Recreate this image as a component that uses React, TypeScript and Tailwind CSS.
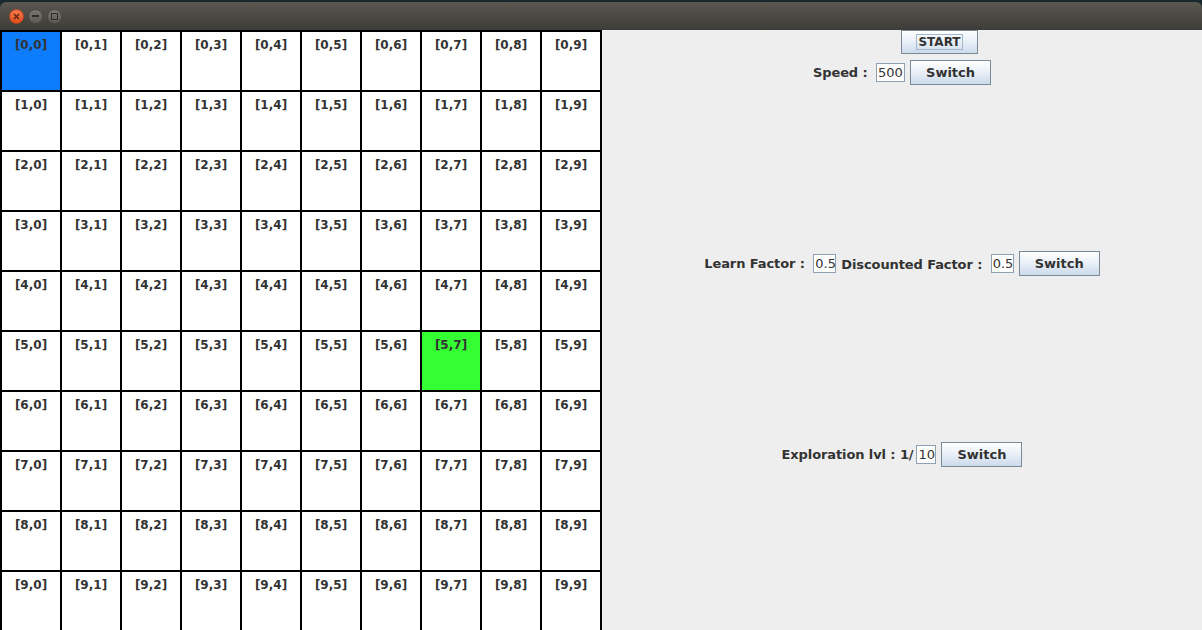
import React from 'react';

const rows = Array.from({ length: 10 }, (_, r) => r);
const cols = Array.from({ length: 10 }, (_, c) => c);

const dejavu = { fontFamily: '"DejaVu Sans", sans-serif' };

const cellColor = (r: number, c: number): string => {
  if (r === 0 && c === 0) return 'bg-[#0d7dfd]';
  if (r === 5 && c === 7) return 'bg-[#33ff33]';
  return 'bg-white';
};

const SwitchButton: React.FC<{ className?: string }> = ({ className }) => (
  <button
    className={`h-[25px] w-[81px] border border-[#7a8a99] bg-gradient-to-b from-[#ffffff] via-[#e8eff7] to-[#ccdaea] text-[13px] font-bold text-[#333333] ${className ?? ''}`}
  >
    Switch
  </button>
);

const Field: React.FC<{ value: string; width: string }> = ({ value, width }) => (
  <div
    className={`h-[19px] ${width} border border-[#8ea0b4] bg-white text-[13px] leading-[17px] text-[#333333] pl-[1px]`}
  >
    {value}
  </div>
);

const Label: React.FC<{ children: React.ReactNode }> = ({ children }) => (
  <span className="text-[13px] font-bold text-[#333333] whitespace-pre tracking-[-0.1px]">{children}</span>
);

export default function App() {
  return (
    <div className="w-[1202px] h-[630px] overflow-hidden bg-[#17292d] flex flex-col" style={dejavu}>
      {/* title bar */}
      <div className="mt-[2px] h-[28px] rounded-t-[6px] bg-gradient-to-b from-[#5b5751] to-[#3e3c38] flex items-center gap-[4px] pl-[9px]">
        <div className="w-[15px] h-[15px] rounded-full bg-gradient-to-b from-[#f47a4c] to-[#e2501c] border border-[#b9441a] flex items-center justify-center">
          <svg width="7" height="7" viewBox="0 0 7 7">
            <path d="M1 1L6 6M6 1L1 6" stroke="#5a2010" strokeWidth="1.3" />
          </svg>
        </div>
        <div className="w-[15px] h-[15px] rounded-full bg-gradient-to-b from-[#7a7670] to-[#5e5b56] border border-[#4a4743] flex items-center justify-center">
          <div className="w-[7px] h-[1.5px] bg-[#2e2c29]" />
        </div>
        <div className="w-[15px] h-[15px] rounded-full bg-gradient-to-b from-[#7a7670] to-[#5e5b56] border border-[#4a4743] flex items-center justify-center">
          <div className="w-[7px] h-[7px] border border-[#2e2c29]" />
        </div>
      </div>

      <div className="flex h-[600px]">
        {/* grid */}
        <div className="w-[602px] h-[600px] bg-white border-r-2 border-black flex flex-col shrink-0">
          {rows.map((r) => (
            <div key={r} className="flex">
              {cols.map((c) => (
                <div
                  key={c}
                  className={`w-[60px] h-[60px] border-l-2 border-t-2 border-black ${cellColor(r, c)} flex justify-center pt-[7px]`}
                >
                  <span className="text-[12px] font-bold leading-none text-[#333333]">[{r},{c}]</span>
                </div>
              ))}
            </div>
          ))}
        </div>

        {/* controls */}
        <div className="flex-1 bg-[#eeeeee] flex flex-col">
          <div className="pl-[299px]">
            <button className="h-[24px] w-[77px] border border-[#7a8a99] bg-gradient-to-b from-[#ffffff] via-[#e8eff7] to-[#ccdaea] flex items-center justify-center">
              <span className="border border-[#a3b8cc] px-[1px] text-[12px] font-bold leading-[14px] text-[#333333]">START</span>
            </button>
          </div>

          <div className="mt-[6px] flex items-center justify-center">
            <Label>Speed : </Label>
            <div className="ml-[4px]"><Field value="500" width="w-[29px]" /></div>
            <SwitchButton className="ml-[5px]" />
          </div>

          <div className="mt-[166px] flex items-center justify-center">
            <Label>Learn Factor : </Label>
            <div className="ml-[4px]"><Field value="0.5" width="w-[23px]" /></div>
            <span className="ml-[5px]"><Label>Discounted Factor : </Label></span>
            <div className="ml-[4px]"><Field value="0.5" width="w-[23px]" /></div>
            <SwitchButton className="ml-[5px]" />
          </div>

          <div className="mt-[166px] flex items-center justify-center">
            <Label>Exploration lvl : 1/</Label>
            <div className="ml-[3px]"><Field value="10" width="w-[20px]" /></div>
            <SwitchButton className="ml-[5px]" />
          </div>
        </div>
      </div>
    </div>
  );
}
